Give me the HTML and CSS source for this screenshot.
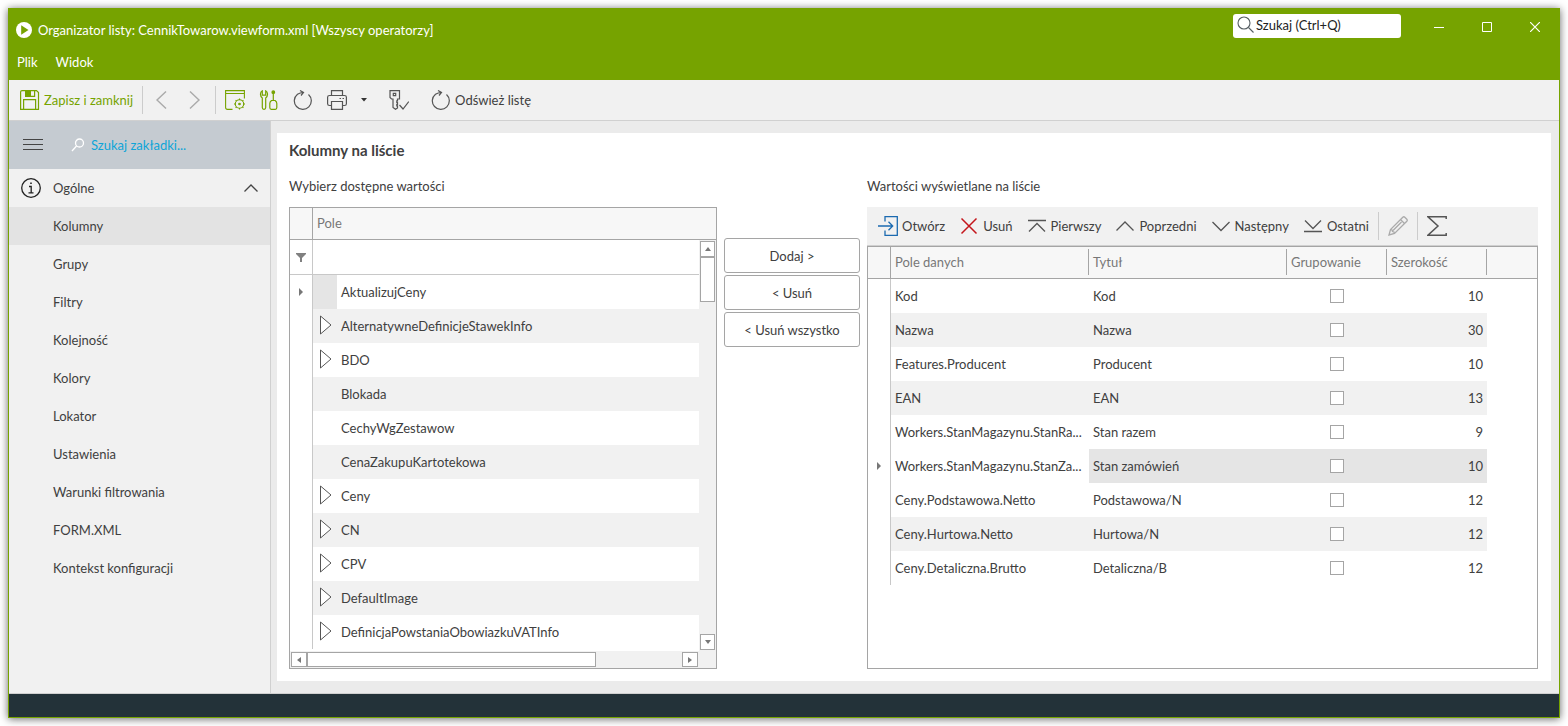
FILE: index.html
```html
<!DOCTYPE html>
<html lang="pl">
<head>
  <meta charset="UTF-8">
  <meta name="viewport" content="width=device-width, initial-scale=1.0">
  <title>Organizator listy</title>
  <link rel="stylesheet" href="styles.css">
</head>
<body>
  <div class="window">
    <header class="titlebar">
      <div class="title-row">
        <svg class="logo" width="16" height="16" viewBox="0 0 16 16"><circle cx="8" cy="8" r="8" fill="#fff"/><path d="M5.2 3.300v9.400L12.500 8z" fill="#76a300"/></svg>
        <h1>Organizator listy: CennikTowarow.viewform.xml [Wszyscy operatorzy]</h1>
        <label class="quick-search">
          <svg width="18" height="18" viewBox="0 0 18 18" fill="none" stroke="#555d62" stroke-width="1.1"><circle cx="7" cy="7" r="6"/><path d="M11.500 11.500l5 5"/></svg>
          <input type="text" placeholder="Szukaj (Ctrl+Q)" aria-label="Szukaj">
        </label>
        <div class="window-buttons">
          <button aria-label="Minimalizuj"><svg width="10" height="10" viewBox="0 0 10 10" stroke="#fff"><path d="M0 5.5h10"/></svg></button>
          <button aria-label="Maksymalizuj"><svg width="10" height="10" viewBox="0 0 10 10" fill="none" stroke="#fff"><path d="M.5 .5h9v9h-9z"/></svg></button>
          <button aria-label="Zamknij"><svg width="10" height="10" viewBox="0 0 10 10" stroke="#fff" stroke-width="1.2"><path d="M0 0l10 10M10 0L0 10"/></svg></button>
        </div>
      </div>
      <nav class="menu">
        <a href="#">Plik</a>
        <a href="#">Widok</a>
      </nav>
    </header>

    <div class="toolbar">
      <button class="tool green">
        <svg width="20" height="20" viewBox="0 0 20 20" fill="none" stroke="currentColor" stroke-width="1.2"><path d="M.6 2Q.6 .6 2 .6h14.500l2 2v16.800H.6z"/><path d="M3.600 19V9.600h12V19"/><path d="M5.600 .6v5.800h9V.6"/><path d="M6 1h5v5H6z" fill="currentColor" stroke="none"/></svg>
        <span>Zapisz i zamknij</span>
      </button>
      <span class="separator"></span>
      <button class="tool dim" aria-label="Wstecz"><svg width="20" height="20" viewBox="0 0 20 20" fill="none" stroke="currentColor" stroke-width="1.4"><path d="M14 1.500L5 10l9 8.500"/></svg></button>
      <button class="tool dim" aria-label="Dalej"><svg width="20" height="20" viewBox="0 0 20 20" fill="none" stroke="currentColor" stroke-width="1.4"><path d="M4 1.500l9 8.500-9 8.500"/></svg></button>
      <span class="separator"></span>
      <button class="tool green" aria-label="Ustawienia okna">
        <svg width="20" height="20" viewBox="0 0 20 20" fill="none" stroke="currentColor" stroke-width="1.1"><path d="M7.500 19.400H2.500Q.6 19.400 .6 17.500V.6h18.800V8.500M.6 3.500h18.800"/><circle cx="14.500" cy="14" r="4.200"/><circle cx="14.500" cy="14" r=".8" fill="currentColor"/><path d="M14.500 8.500v1.500M14.500 18v1.500M9 14h1.500M18.500 14H20M10.600 10.100l1 1M17.400 16.900l1 1M10.600 17.900l1-1M17.400 11.100l1-1"/></svg>
      </button>
      <button class="tool green" aria-label="Narzędzia">
        <svg width="20" height="20" viewBox="0 0 20 20" fill="none" stroke="currentColor" stroke-width="1.2"><path d="M3.300 .8C1.200 1.800 .5 5.800 3.300 8v9.500q0 1.800 1.700 1.800t1.700-1.800V8C9.500 5.800 8.800 1.800 6.700 .8v4.400H3.300z"/><circle cx="14.300" cy="2.200" r="1.300" fill="currentColor"/><path d="M14.300 3v7"/><path d="M12.500 10.500h3.600q1.700 1.200 1.700 3v4q0 1.800-1.500 1.800h-4q-1.500 0-1.500-1.800v-4q0-1.800 1.700-3z"/></svg>
      </button>
      <button class="tool" aria-label="Odśwież">
        <svg width="20" height="20" viewBox="0 0 20 20" fill="none" stroke="currentColor" stroke-width="1.200"><path d="M4.500 4.200A8.500 8.500 0 1 0 15.500 4.500M8 5.500L10.500 2.500 7 .5M10.500 2.500Q7 2.500 4.500 4.200"/></svg>
      </button>
      <button class="tool" aria-label="Drukuj">
        <svg width="20" height="20" viewBox="0 0 20 20" fill="none" stroke="currentColor" stroke-width="1.200"><path d="M4.500 5.500V.6h11v4.900M4.500 15.500H2.500Q.6 15.500 .6 13.700V7.300Q.6 5.500 2.500 5.500h15q1.900 0 1.900 1.800v6.400q0 1.800-1.900 1.800h-2"/><path d="M4.500 11.500h11v7.900h-11z"/><path d="M12.500 8.500h1.500M15.500 8.500H17"/></svg>
      </button>
      <button class="tool caret" aria-label="Opcje drukowania"><svg width="6" height="4" viewBox="0 0 6 4" fill="#333"><path d="M0 0h6L3 3.500z"/></svg></button>
      <button class="tool spaced" aria-label="Uprawnienia">
        <svg width="20" height="20" viewBox="0 0 20 20" fill="none" stroke="currentColor" stroke-width="1.200"><path d="M1 .6h9.500v8.400H8.500v1.800H7.800v1.700h.7v1.800h-.7v1.500h.7v2.200L6.500 19.300 4 17.500V9H2.500L1 7.500z"/><path d="M4.300 3.300h2.400v2.400H4.300z"/><path d="M10.500 15l3.500 4 5.800-7.500"/></svg>
      </button>
      <button class="tool spaced">
        <svg width="20" height="20" viewBox="0 0 20 20" fill="none" stroke="currentColor" stroke-width="1.200"><path d="M4.500 4.200A8.500 8.500 0 1 0 15.500 4.500M8 5.500L10.500 2.500 7 .5M10.500 2.500Q7 2.500 4.500 4.200"/></svg>
        <span>Odśwież listę</span>
      </button>
    </div>

    <div class="workspace">
      <aside class="sidebar">
        <div class="sidebar-head">
          <button aria-label="Menu"><svg width="20" height="12" viewBox="0 0 20 12" stroke="#444"><path d="M0 .5h20M0 5.500h20M0 10.500h20"/></svg></button>
          <label class="tab-search">
            <svg width="14" height="14" viewBox="0 0 14 14" fill="none" stroke="#fff" stroke-width="1.300"><circle cx="8.500" cy="5" r="4"/><path d="M5.500 8L1 13"/></svg>
            <input type="text" placeholder="Szukaj zakładki..." aria-label="Szukaj zakładki">
          </label>
        </div>
        <button class="group">
          <svg width="20" height="20" viewBox="0 0 20 20" fill="none" stroke="#222" stroke-width="1.300"><circle cx="10" cy="10" r="9.300"/><path d="M8 8.500h2.200v6M7.500 14.800h5"/><path d="M9.200 4.500h1.600v1.600H9.200z" fill="#222" stroke="none"/></svg>
          <span>Ogólne</span>
          <svg width="14" height="8" viewBox="0 0 14 8" fill="none" stroke="#444" stroke-width="1.300"><path d="M.5 7.500L7 1l6.500 6.500"/></svg>
        </button>
        <nav class="tabs">
          <a href="#" class="active">Kolumny</a>
          <a href="#">Grupy</a>
          <a href="#">Filtry</a>
          <a href="#">Kolejność</a>
          <a href="#">Kolory</a>
          <a href="#">Lokator</a>
          <a href="#">Ustawienia</a>
          <a href="#">Warunki filtrowania</a>
          <a href="#">FORM.XML</a>
          <a href="#">Kontekst konfiguracji</a>
        </nav>
      </aside>

      <main class="panel">
        <h2>Kolumny na liście</h2>
        <div class="columns">
          <section class="available">
            <h3>Wybierz dostępne wartości</h3>
            <div class="grid-box">
              <table class="fields">
                <thead>
                  <tr><th class="mark"></th><th>Pole</th></tr>
                </thead>
                <tbody>
                  <tr class="filter"><td class="mark"><svg width="10" height="9" viewBox="0 0 10 9" fill="#808080"><path d="M0 0h10v1L6 5v4H4V5L0 1z"/></svg></td><td></td></tr>
                  <tr><td class="mark"><svg width="4" height="8" viewBox="0 0 4 8" fill="#777"><path d="M0 0l4 4-4 4z"/></svg></td><td><span class="node current">AktualizujCeny</span></td></tr>
                  <tr><td class="mark"></td><td><span class="node parent">AlternatywneDefinicjeStawekInfo</span></td></tr>
                  <tr><td class="mark"></td><td><span class="node parent">BDO</span></td></tr>
                  <tr><td class="mark"></td><td><span class="node">Blokada</span></td></tr>
                  <tr><td class="mark"></td><td><span class="node">CechyWgZestawow</span></td></tr>
                  <tr><td class="mark"></td><td><span class="node">CenaZakupuKartotekowa</span></td></tr>
                  <tr><td class="mark"></td><td><span class="node parent">Ceny</span></td></tr>
                  <tr><td class="mark"></td><td><span class="node parent">CN</span></td></tr>
                  <tr><td class="mark"></td><td><span class="node parent">CPV</span></td></tr>
                  <tr><td class="mark"></td><td><span class="node parent">DefaultImage</span></td></tr>
                  <tr><td class="mark"></td><td><span class="node parent">DefinicjaPowstaniaObowiazkuVATInfo</span></td></tr>
                </tbody>
              </table>
              <div class="vscroll">
                <button aria-label="W górę"><svg width="6" height="4" viewBox="0 0 6 4" fill="#777"><path d="M0 4h6L3 0z"/></svg></button>
                <div class="thumb"></div>
                <button class="end" aria-label="W dół"><svg width="6" height="4" viewBox="0 0 6 4" fill="#777"><path d="M0 0h6L3 4z"/></svg></button>
              </div>
              <div class="hscroll">
                <button aria-label="W lewo"><svg width="4" height="6" viewBox="0 0 4 6" fill="#777"><path d="M4 0v6L0 3z"/></svg></button>
                <div class="thumb"></div>
                <button class="end" aria-label="W prawo"><svg width="4" height="6" viewBox="0 0 4 6" fill="#777"><path d="M0 0v6l4-3z"/></svg></button>
              </div>
            </div>
          </section>

          <div class="move-buttons">
            <button>Dodaj &gt;</button>
            <button>&lt; Usuń</button>
            <button>&lt; Usuń wszystko</button>
          </div>

          <section class="displayed">
            <h3>Wartości wyświetlane na liście</h3>
            <div class="toolbar list-toolbar">
              <button class="tool"><svg width="20" height="20" viewBox="0 0 20 20" fill="none" stroke="#1b6ab0" stroke-width="1.300"><path d="M7 5.500V.7h12.300v18.600H7v-4.800M0 10h14.500M10.500 5.800l4.200 4.200-4.200 4.200"/></svg><span>Otwórz</span></button>
              <button class="tool"><svg width="20" height="20" viewBox="0 0 20 20" stroke="#c4161c" stroke-width="1.500"><path d="M2.500 2.500l15 15M17.500 2.500l-15 15"/></svg><span>Usuń</span></button>
              <button class="tool"><svg width="20" height="20" viewBox="0 0 20 20" fill="none" stroke="currentColor" stroke-width="1.300"><path d="M1 4.500h18M2 15.500l8-8 8 8"/></svg><span>Pierwszy</span></button>
              <button class="tool"><svg width="20" height="20" viewBox="0 0 20 20" fill="none" stroke="currentColor" stroke-width="1.300"><path d="M1.500 14.500L10 6l8.500 8.500"/></svg><span>Poprzedni</span></button>
              <button class="tool"><svg width="20" height="20" viewBox="0 0 20 20" fill="none" stroke="currentColor" stroke-width="1.300"><path d="M1.500 6l8.500 8.500L18.500 6"/></svg><span>Następny</span></button>
              <button class="tool"><svg width="20" height="20" viewBox="0 0 20 20" fill="none" stroke="currentColor" stroke-width="1.300"><path d="M1 15.500h18M2 4.500l8 8 8-8"/></svg><span>Ostatni</span></button>
              <span class="separator"></span>
              <button class="tool dim" aria-label="Edytuj"><svg width="20" height="20" viewBox="0 0 20 20" fill="none" stroke="currentColor" stroke-width="1.300"><path d="M1 19l1.500-5.500L14.800 1.200q1-.9 2 0l2 2q.9 1 0 2L6.500 17.500z"/><path d="M12.500 3.500l4 4M2.500 13.500l1.500.5.5 1.500 1.500.5.5 1.500M5 14.500l8.500-8.500"/></svg></button>
              <span class="separator"></span>
              <button class="tool" aria-label="Suma"><svg width="20" height="20" viewBox="0 0 20 20" fill="none" stroke="currentColor" stroke-width="1.500"><path d="M19.200 3V.8H1L11 10 1 19.200h18.200V17"/></svg></button>
            </div>
            <div class="grid-box">
              <table class="selected">
                <thead>
                  <tr>
                    <th class="mark"></th>
                    <th class="wide"><span>Pole danych</span></th>
                    <th class="wide"><span>Tytuł</span></th>
                    <th class="narrow"><span>Grupowanie</span></th>
                    <th class="narrow"><span>Szerokość</span></th>
                    <th></th>
                  </tr>
                </thead>
                <tbody>
                  <tr><td class="mark"></td><td>Kod</td><td>Kod</td><td class="check"><input type="checkbox" aria-label="Grupowanie Kod"></td><td class="num">10</td><td></td></tr>
                  <tr><td class="mark"></td><td>Nazwa</td><td>Nazwa</td><td class="check"><input type="checkbox" aria-label="Grupowanie Nazwa"></td><td class="num">30</td><td></td></tr>
                  <tr><td class="mark"></td><td>Features.Producent</td><td>Producent</td><td class="check"><input type="checkbox" aria-label="Grupowanie Producent"></td><td class="num">10</td><td></td></tr>
                  <tr><td class="mark"></td><td>EAN</td><td>EAN</td><td class="check"><input type="checkbox" aria-label="Grupowanie EAN"></td><td class="num">13</td><td></td></tr>
                  <tr><td class="mark"></td><td>Workers.StanMagazynu.StanRa...</td><td>Stan razem</td><td class="check"><input type="checkbox" aria-label="Grupowanie Stan razem"></td><td class="num">9</td><td></td></tr>
                  <tr class="current"><td class="mark"><svg width="4" height="8" viewBox="0 0 4 8" fill="#777"><path d="M0 0l4 4-4 4z"/></svg></td><td>Workers.StanMagazynu.StanZa...</td><td>Stan zamówień</td><td class="check"><input type="checkbox" aria-label="Grupowanie Stan zamówień"></td><td class="num">10</td><td></td></tr>
                  <tr><td class="mark"></td><td>Ceny.Podstawowa.Netto</td><td>Podstawowa/N</td><td class="check"><input type="checkbox" aria-label="Grupowanie Podstawowa/N"></td><td class="num">12</td><td></td></tr>
                  <tr><td class="mark"></td><td>Ceny.Hurtowa.Netto</td><td>Hurtowa/N</td><td class="check"><input type="checkbox" aria-label="Grupowanie Hurtowa/N"></td><td class="num">12</td><td></td></tr>
                  <tr><td class="mark"></td><td>Ceny.Detaliczna.Brutto</td><td>Detaliczna/B</td><td class="check"><input type="checkbox" aria-label="Grupowanie Detaliczna/B"></td><td class="num">12</td><td></td></tr>
                </tbody>
              </table>
            </div>
          </section>
        </div>
      </main>
    </div>

    <footer class="statusbar"></footer>
  </div>
</body>
</html>
```
FILE: styles.css
```css
* {
  box-sizing: border-box;
}

body {
  margin: 0;
  padding: 8px;
  background-color: #ffffff;
  color: #404040;
  font-family: Lato, sans-serif;
  font-size: 13px;
  line-height: 18px;
}

button,
input {
  font: inherit;
  color: inherit;
  margin: 0;
}

button {
  background: none;
  border: none;
  padding: 0;
}

a {
  color: inherit;
  text-decoration: none;
}

h1,
h2,
h3 {
  margin: 0;
  font-size: 13px;
  font-weight: 400;
}

svg {
  display: block;
  flex: none;
}

.window {
  display: flex;
  flex-direction: column;
  min-height: calc(100vh - 16px);
  border: 1px solid #76a300;
  box-shadow: 0 1px 8px rgba(0, 0, 0, 0.6);
}

/* Title bar */
.titlebar {
  background-color: #76a300;
  color: #ffffff;
  height: 71px;
}

.title-row {
  display: flex;
  align-items: center;
  height: 42px;
  padding-left: 7px;
}

.title-row h1 {
  margin-left: 6px;
  flex: 1;
}

.quick-search {
  display: flex;
  align-items: center;
  align-self: flex-start;
  width: 168px;
  height: 24px;
  margin: 5px 14px 0 0;
  padding: 0 4px 2px;
  gap: 1px;
  background-color: #ffffff;
  border-radius: 3px;
}

.quick-search input,
.tab-search input {
  flex: 1;
  min-width: 0;
  border: none;
  outline: none;
  background: none;
  padding: 0;
}

.quick-search input::placeholder {
  color: #222222;
}

.window-buttons {
  display: flex;
  align-self: flex-start;
}

.window-buttons button {
  display: flex;
  align-items: center;
  justify-content: center;
  width: 48px;
  height: 36px;
}

.menu {
  display: flex;
  gap: 18px;
  padding: 2px 8px;
}

/* Toolbars */
.toolbar {
  display: flex;
  align-items: center;
  height: 41px;
  padding-left: 4px;
  background-color: #f1f1f1;
  border-bottom: 1px solid #d0d0d0;
}

.tool {
  display: flex;
  align-items: center;
  gap: 4px;
  height: 30px;
  padding: 0 7px;
  white-space: nowrap;
}

.tool svg {
  color: #555555;
}

.green,
.green svg {
  color: #76a300;
}

.dim svg {
  color: #aaaaaa;
}

.caret {
  width: 20px;
}

.spaced {
  margin-left: 8px;
}

.separator {
  width: 1px;
  height: 28px;
  margin: 0 2px;
  background-color: #cccccc;
}

/* Sidebar */
.workspace {
  display: flex;
  flex: 1;
  border-bottom: 1px solid #d0d0d0;
}

.sidebar {
  width: 262px;
  flex: none;
  background-color: #f1f1f1;
  border-right: 1px solid #d0d0d0;
}

.sidebar-head {
  display: flex;
  align-items: center;
  height: 48px;
  padding: 0 14px;
  gap: 28px;
  background-color: #c5cbd1;
}

.tab-search {
  display: flex;
  align-items: center;
  flex: 1;
  gap: 6px;
}

.tab-search input::placeholder {
  color: #0ea5d8;
}

.group {
  display: flex;
  align-items: center;
  gap: 12px;
  width: 100%;
  height: 38px;
  padding: 0 12px;
  text-align: left;
}

.group span {
  flex: 1;
}

.tabs {
  display: flex;
  flex-direction: column;
}

.tabs a {
  padding: 10px 44px;
}

.tabs .active {
  background-color: #e3e3e3;
}

/* Content */
.panel {
  flex: 1;
  min-width: 0;
  display: flex;
  flex-direction: column;
  padding: 7px 13px 12px 12px;
  background-color: #ffffff;
  border: solid #ebebeb;
  border-width: 12px 8px 12px 6px;
}

.panel h2 {
  font-size: 15px;
  font-weight: 700;
  line-height: 20px;
}

.columns {
  flex: 1;
  display: grid;
  grid-template-columns: 428fr 136px 671fr;
  gap: 7px;
  margin-top: 17px;
}

.columns h3 {
  height: 30px;
}

.available,
.displayed {
  display: flex;
  flex-direction: column;
  min-width: 0;
}

.grid-box {
  position: relative;
  flex: 1;
  border: 1px solid #a5a5a5;
}

table {
  width: 100%;
  border-collapse: separate;
  border-spacing: 0;
  table-layout: fixed;
}

th {
  height: 32px;
  padding: 0 4px 2px;
  background-color: #f7f7f7;
  border-bottom: 1px solid #a5a5a5;
  color: #777777;
  font-weight: 400;
  text-align: left;
}

td {
  height: 34px;
  padding: 0 4px;
  overflow: hidden;
  text-overflow: ellipsis;
  white-space: nowrap;
}

.mark {
  width: 23px;
  padding: 0;
  border-right: 1px solid #c8c8c8;
}

th.mark {
  border-right-color: #a5a5a5;
}

.mark svg {
  margin: 0 auto;
}

.filter td {
  height: 35px;
  border-bottom: 1px solid #c8c8c8;
}

.fields tr:nth-child(odd):not(.filter) td:not(.mark) {
  background-color: #f1f1f1;
}

.fields td:not(.mark) {
  padding: 0;
}

.node {
  display: flex;
  align-items: center;
  height: 34px;
}

.node::before {
  content: "";
  width: 24px;
  height: 34px;
  margin-right: 4px;
}

.node.current::before {
  background-color: #e5e5e5;
}

.node.parent::before {
  background: url("data:image/svg+xml,%3Csvg xmlns='http://www.w3.org/2000/svg' width='12' height='20' fill='white' stroke='%23555'%3E%3Cpath d='M.5 1v18L11 10z'/%3E%3C/svg%3E") no-repeat 7px 6px;
}

/* Scroll bars lie over the right and bottom edges of the list */
.vscroll,
.hscroll {
  position: absolute;
  display: flex;
  background-color: #f1f1f1;
}

.vscroll {
  flex-direction: column;
  top: 32px;
  right: 0;
  bottom: 17px;
  width: 17px;
  padding: 1px;
}

.hscroll {
  left: 0;
  right: 0;
  bottom: 0;
  height: 17px;
  padding: 1px 18px 1px 1px;
}

.vscroll button,
.hscroll button {
  display: flex;
  align-items: center;
  justify-content: center;
  width: 15px;
  height: 16px;
  background-color: #ffffff;
  border: 1px solid #a5a5a5;
}

.hscroll button {
  width: 16px;
  height: 15px;
}

.thumb {
  height: 45px;
  background-color: #ffffff;
  border: 1px solid #a5a5a5;
}

.hscroll .thumb {
  width: 71%;
  height: 15px;
}

.vscroll .end {
  margin-top: auto;
}

.hscroll .end {
  margin-left: auto;
}

.move-buttons {
  display: flex;
  flex-direction: column;
  gap: 2px;
  padding-top: 61px;
}

.move-buttons button {
  height: 35px;
  background-color: #ffffff;
  border: 1px solid #a5a5a5;
  border-radius: 3px;
}

.list-toolbar {
  height: 39px;
}

.selected .wide {
  width: 198px;
}

.selected .narrow {
  width: 100px;
}

.selected th span {
  display: block;
  margin-right: -4px;
  border-right: 1px solid #a5a5a5;
  line-height: 26px;
}

.selected tr:nth-child(even) td:not(.mark):not(:last-child) {
  background-color: #f1f1f1;
}

.selected .current td:nth-child(n+3):not(:last-child) {
  background-color: #e5e5e5 !important;
}

.selected .current td:nth-child(2) {
  background-color: #ffffff !important;
}

.check {
  text-align: center;
}

.check input {
  display: block;
  appearance: none;
  width: 14px;
  height: 14px;
  margin: 0 auto;
  background-color: #ffffff;
  border: 1px solid #a5a5a5;
}

.num {
  text-align: right;
}

.statusbar {
  height: 23px;
  background-color: #233239;
}
```
